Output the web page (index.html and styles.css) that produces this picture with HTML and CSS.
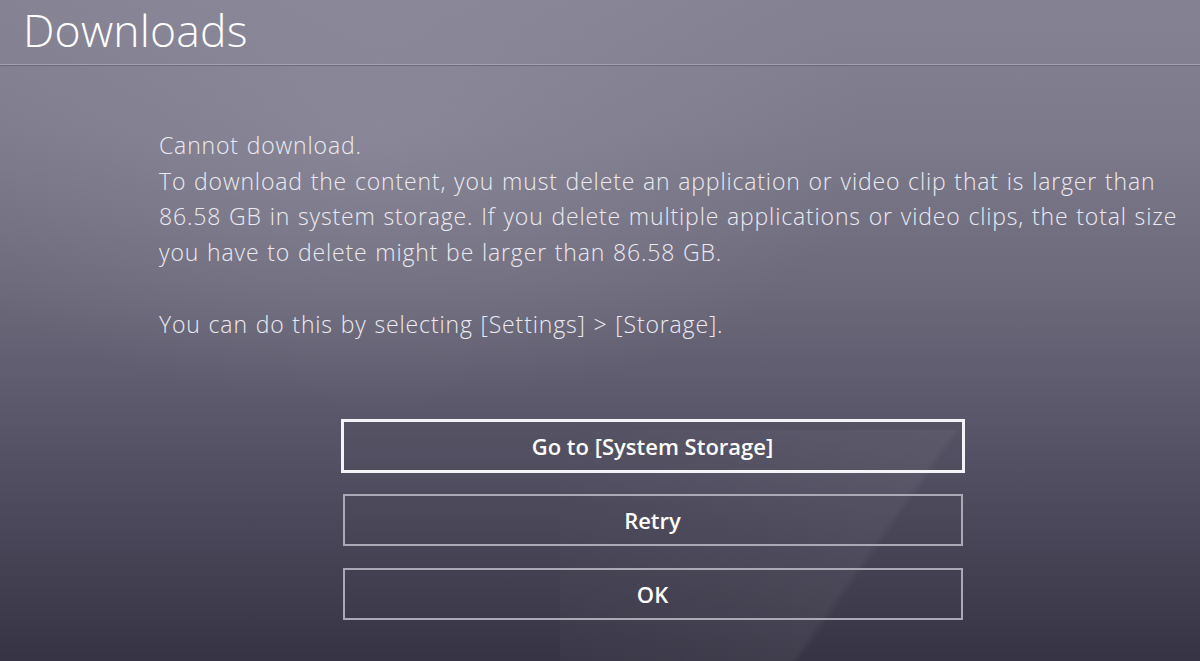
FILE: index.html
```html
<!DOCTYPE html>
<html lang="en">
<head>
<meta charset="utf-8">
<title>Downloads</title>
<link rel="stylesheet" href="styles.css">
</head>
<body>
<div class="screen">
  <div class="streak"></div>
  <header class="header">
    <h1 class="title">Downloads</h1>
  </header>
  <main class="content">
    <div class="message">
      <p class="line">Cannot download.</p>
      <p class="line">To download the content, you must delete an application or video clip that is larger than 86.58 GB in system storage. If you delete multiple applications or video clips, the total size you have to delete might be larger than 86.58 GB.</p>
      <p class="line gap">You can do this by selecting [Settings] &gt; [Storage].</p>
    </div>
    <div class="actions">
      <button class="btn focused">Go to [System Storage]</button>
      <button class="btn">Retry</button>
      <button class="btn last">OK</button>
    </div>
  </main>
</div>
</body>
</html>
```
FILE: styles.css
```css
html, body {
  margin: 0;
  padding: 0;
}
body {
  width: 1200px;
  height: 661px;
  overflow: hidden;
  font-family: "Open Sans", "Liberation Sans", sans-serif;
  color: #ecebf1;
}
.screen {
  position: relative;
  width: 1200px;
  height: 661px;
  overflow: hidden;
  background:
    radial-gradient(ellipse 700px 380px at 380px 140px, rgba(160,158,175,0.35), rgba(160,158,175,0) 70%),
    linear-gradient(180deg, #858393 0%, #7c7a8b 20%, #6a6879 45%, #545264 68%, #3f3d4e 90%, #363444 100%);
}
.streak {
  position: absolute;
  left: 560px;
  top: 430px;
  width: 700px;
  height: 400px;
  background: linear-gradient(125deg, rgba(255,255,255,0) 0%, rgba(255,255,255,0.05) 40%, rgba(255,255,255,0) 41%);
  pointer-events: none;
}
.header {
  position: relative;
  height: 64px;
  border-bottom: 1px solid #a4a2b0;
  box-shadow: 0 1px 0 rgba(90,88,104,0.6);
}
.title {
  margin: 0;
  padding-left: 23px;
  padding-top: 4px;
  font-weight: 300;
  font-size: 44.5px;
  line-height: 52px;
  color: #ffffff;
  letter-spacing: 0.2px;
}
.content {
  position: relative;
  padding: 63px 0 0 159px;
}
.message {
  width: 1035px;
  font-weight: 300;
  font-size: 23px;
  line-height: 35.7px;
  letter-spacing: 0.85px;
  word-spacing: 1px;
}
.line {
  margin: 0;
}
.line.gap {
  margin-top: 35.7px;
}
.actions {
  display: flex;
  flex-direction: column;
  align-items: center;
  width: 987px;
  margin-top: 77px;
  gap: 21px;
}
.btn {
  box-sizing: border-box;
  width: 620px;
  height: 52px;
  background: rgba(70,68,86,0.12);
  border: 2px solid #aba9b6;
  color: #ffffff;
  font-family: "Open Sans", "Liberation Sans", sans-serif;
  font-weight: 600;
  font-size: 22px;
  letter-spacing: 0;
  padding: 0;
  cursor: pointer;
}
.btn.focused {
  width: 624px;
  height: 54px;
  border: 3px solid #f4f4f8;
}
.btn.last {
  margin-top: 1px;
}
```
